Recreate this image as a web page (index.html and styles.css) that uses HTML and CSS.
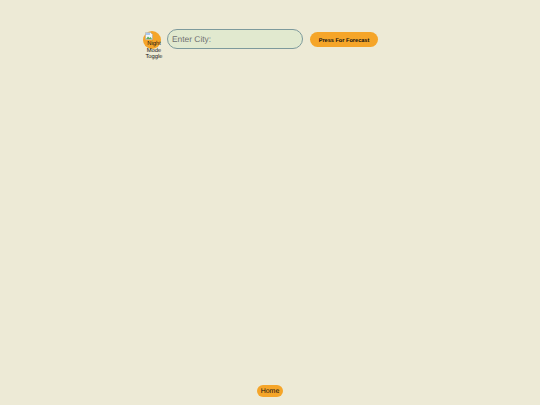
FILE: index.html
```html
<!DOCTYPE html>
<html lang="en">
<head>
    <meta charset="UTF-8">
    <meta name="viewport" content="width=device-width, initial-scale=1.0">
    <title>Weather Forecast</title>
    <link rel="stylesheet" href="styles.css">
</head>
<body>
    <div class="search-row">
        <div class="night-toggle">
            <svg class="broken-icon" viewBox="0 0 16 16" width="8" height="8">
                <path d="M1 1h10l4 4v10H1z" fill="#f4f6f8" stroke="#9aa0a6"/>
                <path d="M2 14l4-5 3 3 2-2 3 4z" fill="#5cae5c"/>
                <path d="M2 2h8v4H2z" fill="#a9c8f0"/>
            </svg>
            <span class="toggle-label">Night Mode Toggle</span>
        </div>
        <input class="city-input" type="text" placeholder="Enter City:">
        <button class="forecast-button">Press For Forecast</button>
    </div>
    <div class="footer">
        <a class="home-link" href="#">Home</a>
    </div>
</body>
</html>
```

FILE: styles.css
```css
body {
    display: flex;
    flex-direction: column;
    height: 100vh;
    margin: 0;
    background-color: #edead6;
    font-family: "Liberation Sans", Arial, sans-serif;
    text-rendering: geometricPrecision;
    box-sizing: border-box;
    padding: 29px 0 8px 143px;
}

.search-row {
    display: flex;
    align-items: flex-start;
}

.night-toggle {
    width: 18px;
    height: 18px;
    margin-top: 2px;
    border-radius: 50%;
    background-color: #f5a529;
    font-size: 5.8px;
    line-height: 6.5px;
    color: #111;
    text-align: center;
}

.broken-icon {
    display: block;
    margin-left: 2px;
    margin-top: 1px;
}

.toggle-label {
    display: block;
    width: 22px;
    margin-top: 1px;
}

.city-input {
    width: 136px;
    height: 20px;
    box-sizing: border-box;
    margin-left: 6px;
    padding: 0 4px;
    border: 1.5px solid #7d9a9c;
    border-radius: 10px;
    background-color: #e1e9cf;
    font-family: "Liberation Sans", Arial, sans-serif;
    text-rendering: geometricPrecision;
    font-size: 8.4px;
    outline: none;
}

.city-input::placeholder {
    color: #6f6f6f;
}

.forecast-button {
    width: 68px;
    height: 15px;
    margin-left: 7px;
    margin-top: 3px;
    padding: 2px 0 0;
    border: none;
    border-radius: 8px;
    background-color: #f5a529;
    color: #111;
    font-family: "Liberation Sans", Arial, sans-serif;
    text-rendering: geometricPrecision;
    font-size: 5.6px;
    font-weight: bold;
}

.footer {
    margin-top: auto;
    margin-left: -143px;
    display: flex;
    justify-content: center;
}

.home-link {
    display: block;
    width: 26px;
    height: 12px;
    border-radius: 6px;
    background-color: #f5a529;
    color: #111;
    font-size: 7px;
    line-height: 13px;
    text-align: center;
    text-decoration: none;
}
```
